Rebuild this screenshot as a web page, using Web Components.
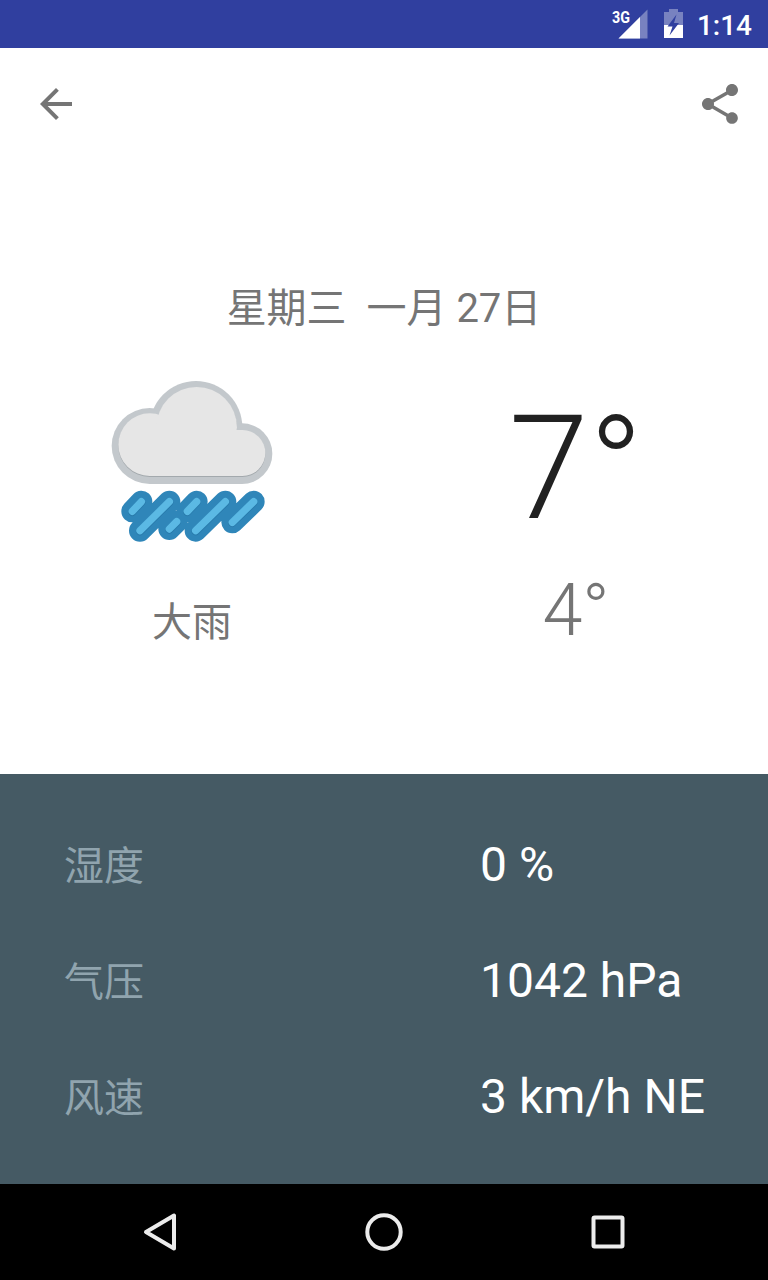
<!DOCTYPE html>
<html lang="zh">
<head>
<meta charset="utf-8">
<title>大雨</title>
<style>
  body {
    margin: 0;
    background: #fff;
    font-family: Roboto, "Noto Sans CJK SC", sans-serif;
  }
</style>
</head>
<body>
<weather-screen></weather-screen>

<script>
const define = (name, html) => {
    const template = document.createElement('template');
    template.innerHTML = html;

    window.customElements.define(name, class extends HTMLElement {
        constructor() {
            super();

            this.attachShadow({mode: 'open'});
            this.shadowRoot.appendChild(template.content.cloneNode(true));
        }
    });
};

define('status-bar', `
<style>
  :host {
    display: flex;
    align-items: center;
    justify-content: flex-end;
    box-sizing: border-box;
    height: 48px;
    padding-right: 16px;
    background: #303f9f;
    color: #fff;
  }

  svg {
    display: block;
  }

  .signal {
    margin-right: 15px;
  }

  .battery {
    margin-right: 14px;
  }

  .network {
    font: 700 16px/1 Roboto, sans-serif;
  }

  .clock {
    font-size: 28px;
    font-weight: 500;
    line-height: 46px;
    padding-top: 4px;
  }
</style>
<svg class="signal" width="36" height="48" viewBox="0 0 36 48">
  <path d="M35.500 9.500V38.500H6.500z" fill="#fff" opacity=".35"/>
  <path d="M28 17V38.500H6.500z" fill="#fff"/>
  <text class="network" x="0" y="22.500" fill="#fff" textLength="18" lengthAdjust="spacingAndGlyphs">3G</text>
</svg>
<svg class="battery" width="20" height="48" viewBox="0 0 20 48">
  <path d="M1 12H6V9H15V12H20V25H1z" fill="#fff" opacity=".35"/>
  <path d="M1 25H20V38H1z" fill="#fff"/>
  <path d="M13.500 14.500L4.500 26.500H9.500L6.500 35.500L16 23H11z" fill="#303f9f"/>
</svg>
<span class="clock">1:14</span>
`);

define('app-bar', `
<style>
  :host {
    display: flex;
    align-items: center;
    justify-content: space-between;
    box-sizing: border-box;
    height: 112px;
    padding: 0 24px 0 32px;
  }

  svg {
    display: block;
    width: 48px;
    height: 48px;
    fill: #757575;
  }
</style>
<svg viewBox="0 0 24 24"><path d="M20 11H7.830l5.590-5.590L12 4l-8 8 8 8 1.410-1.410L7.830 13H20v-2z"/></svg>
<svg viewBox="0 0 24 24"><path d="M18 16.080c-.76 0-1.440.3-1.960.770L8.910 12.700c.050-.230.090-.460.090-.7s-.040-.470-.090-.7l7.050-4.110c.540.5 1.250.810 2.040.810 1.660 0 3-1.340 3-3s-1.340-3-3-3-3 1.340-3 3c0 .240.040.470.090.7L8.040 9.810C7.500 9.310 6.790 9 6 9c-1.660 0-3 1.340-3 3s1.340 3 3 3c.790 0 1.500-.310 2.040-.810l7.120 4.160c-.050.210-.080.430-.080.650 0 1.610 1.310 2.920 2.920 2.920 1.610 0 2.920-1.310 2.920-2.920s-1.310-2.920-2.920-2.920z"/></svg>
`);

define('rain-icon', `
<style>
  :host {
    display: block;
    width: 184px;
    height: 184px;
  }

  svg {
    display: block;
  }
</style>
<svg width="184" height="184" viewBox="0 0 552 552">
  <defs>
    <g id="outer">
      <circle cx="149" cy="228" r="114"/>
      <circle cx="288" cy="172" r="139"/>
      <circle cx="426" cy="251" r="91"/>
      <path d="M149 200H426V342H149z"/>
    </g>
    <g id="inner">
      <circle cx="149" cy="224" r="94"/>
      <circle cx="290" cy="172" r="121"/>
      <circle cx="427" cy="249" r="69"/>
      <path d="M149 180H427V318H149z"/>
    </g>
    <path id="drops" d="M97 424L124 395M120 482L208 395M208 477L230 455M262 424L290 395M287 482L376 395M397 457L461 395"/>
  </defs>
  <use href="#outer" fill="#c3c8cc"/>
  <use href="#inner" fill="#a3a9ad" transform="translate(0 3)"/>
  <use href="#inner" fill="#e6e6e6"/>
  <g fill="none" stroke-linecap="round">
    <use href="#drops" stroke="#2f86b9" stroke-width="66"/>
    <use href="#drops" stroke="#287aab" stroke-width="24" transform="translate(0 2)"/>
    <use href="#drops" stroke="#5bb9e4" stroke-width="22"/>
  </g>
</svg>
`);

define('day-summary', `
<style>
  :host {
    display: flex;
    flex-direction: column;
    box-sizing: border-box;
    height: 614px;
    padding-top: 121px;
    color: #757575;
    font-size: 40px;
  }

  .date {
    height: 56px;
    line-height: 56px;
    text-align: center;
    white-space: pre;
  }

  .columns {
    display: grid;
    grid-template-columns: 1fr 1fr;
    padding-top: 33px;
  }

  .column {
    display: flex;
    flex-direction: column;
    align-items: center;
  }

  .condition {
    margin-top: 41px;
    line-height: 56px;
  }

  .high {
    color: #212121;
    font-size: 144px;
    font-weight: 300;
    line-height: 168px;
    margin-top: 15px;
  }

  .low {
    font-size: 72px;
    font-weight: 300;
    line-height: 84px;
    margin-top: 16px;
  }
</style>
<div class="date"><slot name="date"></slot></div>
<div class="columns">
  <div class="column">
    <rain-icon></rain-icon>
    <div class="condition"><slot name="condition"></slot></div>
  </div>
  <div class="column">
    <div class="high"><slot name="high"></slot></div>
    <div class="low"><slot name="low"></slot></div>
  </div>
</div>
`);

define('detail-row', `
<style>
  :host {
    display: grid;
    grid-template-columns: 416px 1fr;
    align-items: center;
    height: 116px;
  }

  .label {
    color: #90a4ae;
    font-size: 40px;
    line-height: 56px;
    padding-top: 6px;
  }

  .value {
    color: #fff;
    font-size: 48px;
    line-height: 56px;
    padding-top: 2px;
    white-space: nowrap;
  }
</style>
<div class="label"><slot name="label"></slot></div>
<div class="value"><slot></slot></div>
`);

define('detail-panel', `
<style>
  :host {
    display: block;
    box-sizing: border-box;
    height: 410px;
    padding: 32px 0 30px 64px;
    background: #455a64;
  }
</style>
<slot></slot>
`);

define('nav-bar', `
<style>
  :host {
    display: grid;
    grid-template-columns: repeat(3, 1fr);
    place-items: center;
    box-sizing: border-box;
    height: 96px;
    padding: 0 48px;
    background: #000;
  }

  svg {
    display: block;
    fill: none;
    stroke: #ececec;
    stroke-width: 4;
    stroke-linejoin: round;
  }
</style>
<svg width="48" height="48" viewBox="0 0 48 48"><path d="M38 7.500V40.500L10 24z"/></svg>
<svg width="48" height="48" viewBox="0 0 48 48"><circle cx="24" cy="24" r="16.700"/></svg>
<svg width="48" height="48" viewBox="0 0 48 48"><rect x="9.500" y="9.500" width="29" height="29" rx="1"/></svg>
`);

define('weather-screen', `
<style>
  :host {
    display: flex;
    flex-direction: column;
    width: 768px;
    height: 1280px;
    overflow: hidden;
  }
</style>
<status-bar></status-bar>
<app-bar></app-bar>
<day-summary>
  <span slot="date">星期三  一月 27日</span>
  <span slot="condition">大雨</span>
  <span slot="high">7°</span>
  <span slot="low">4°</span>
</day-summary>
<detail-panel>
  <detail-row><span slot="label">湿度</span>0 %</detail-row>
  <detail-row><span slot="label">气压</span>1042 hPa</detail-row>
  <detail-row><span slot="label">风速</span>3 km/h NE</detail-row>
</detail-panel>
<nav-bar></nav-bar>
`);
</script>
</body>
</html>
